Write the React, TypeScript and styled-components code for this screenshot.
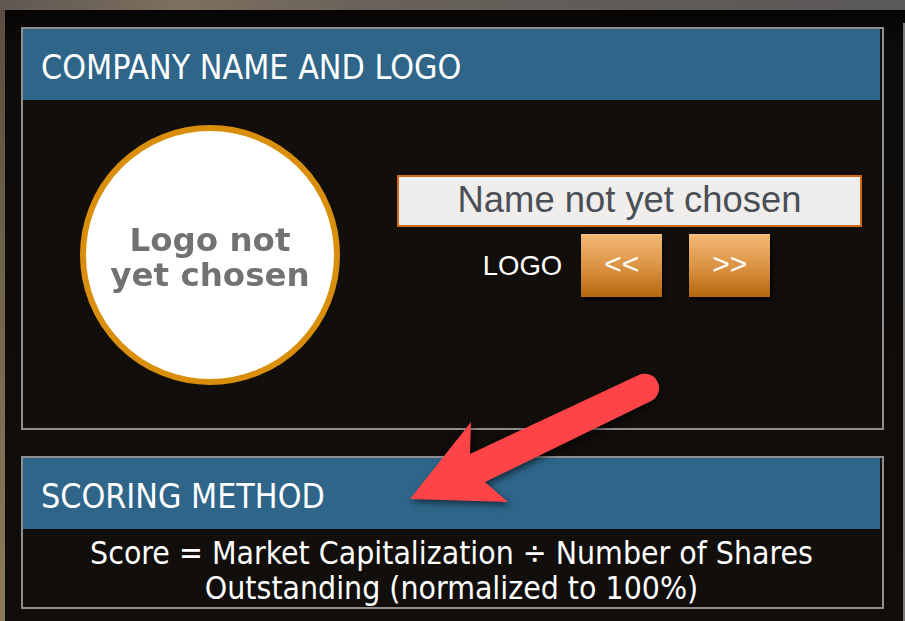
import React from "react";
import styled, { createGlobalStyle } from "styled-components";

const GlobalStyle = createGlobalStyle`
    html, body {
        margin: 0;
        padding: 0;
        background: #0d0b09;
    }
    * {
        box-sizing: border-box;
    }
`;

function Arrow() {
    return (
        <ArrowLayer width="905" height="621" viewBox="0 0 905 621">
            <path
                d="M410 499 L471 422 L470 454 L638.8 374.9 A14.5 14.5 0 0 1 651.2 401.1 L485 482 L508 502 Z"
                fill="#ff4448"
            />
        </ArrowLayer>
    );
}

function App() {
    return (
        <Page>
            <GlobalStyle />
            <TopStrip />
            <Main>
                <LeftEdge />
                <Frame>
                    <Column>
                        <Panel $height={403}>
                            <PanelHeader>COMPANY NAME AND LOGO</PanelHeader>
                            <LogoBody>
                                <LogoCircle>
                                    <LogoPlaceholder>
                                        Logo not
                                        <br />
                                        yet chosen
                                    </LogoPlaceholder>
                                </LogoCircle>
                                <Controls>
                                    <NameBox>Name not yet chosen</NameBox>
                                    <LogoRow>
                                        <LogoLabel>LOGO</LogoLabel>
                                        <NavButton>&lt;&lt;</NavButton>
                                        <NavButton>&gt;&gt;</NavButton>
                                    </LogoRow>
                                </Controls>
                            </LogoBody>
                        </Panel>
                        <Panel $height={153}>
                            <PanelHeader>SCORING METHOD</PanelHeader>
                            <ScoreText>
                                Score = Market Capitalization ÷ Number of Shares
                                <br />
                                Outstanding (normalized to 100%)
                            </ScoreText>
                        </Panel>
                    </Column>
                    <SidePanel />
                </Frame>
            </Main>
            <Arrow />
        </Page>
    );
}

export default App;

const Page = styled.div`
    position: relative;
    width: 905px;
    height: 621px;
    overflow: hidden;
    display: flex;
    flex-direction: column;
    background: #0d0b09;
`;

const TopStrip = styled.div`
    height: 10px;
    flex-shrink: 0;
    background: linear-gradient(
        90deg,
        #5f5751 0%,
        #7d705f 20%,
        #6a625a 40%,
        #5e5b58 70%,
        #5c5a59 100%
    );
`;

const Main = styled.div`
    flex: 1;
    display: flex;
`;

const LeftEdge = styled.div`
    width: 5px;
    flex-shrink: 0;
    background: linear-gradient(180deg, #5a4e40 0%, #7a6a50 60%, #8c7a5a 100%);
`;

const Frame = styled.div`
    flex: 1;
    display: flex;
    gap: 19px;
    padding: 17px 0 0 16px;
    background: linear-gradient(180deg, #070504 0px, #0e0c0a 40px, #100d0b 100%);
`;

const Column = styled.div`
    width: 863px;
    flex-shrink: 0;
    display: flex;
    flex-direction: column;
    gap: 26px;
`;

const Panel = styled.section<{ $height: number }>`
    height: ${(p) => p.$height}px;
    border: 2px solid #8e8e8e;
    padding: 0 2px 0 0;
    background: #110e0c;
    display: flex;
    flex-direction: column;
`;

const SidePanel = styled.div`
    width: 20px;
    margin-top: -4px;
    border-left: 2px solid #7a7a7a;
    border-top: 2px solid #7a7a7a;
    background: #110e0c;
`;

const PanelHeader = styled.h2`
    margin: 0;
    height: 71px;
    flex-shrink: 0;
    display: flex;
    align-items: center;
    padding: 5px 0 0 18px;
    background: #2e6589;
    color: #ffffff;
    font-family: "DejaVu Sans Condensed", "DejaVu Sans", sans-serif;
    font-stretch: condensed;
    font-size: 33.7px;
    font-weight: 400;
`;

const LogoBody = styled.div`
    display: flex;
    align-items: flex-start;
    padding: 25px 0 0 57px;
`;

const LogoCircle = styled.div`
    width: 260px;
    height: 260px;
    flex-shrink: 0;
    border-radius: 50%;
    border: 6px solid #d98e0c;
    background: #ffffff;
    display: flex;
    align-items: center;
    justify-content: center;
`;

const LogoPlaceholder = styled.div`
    margin-top: 6px;
    color: #727272;
    font-family: "DejaVu Sans", Verdana, sans-serif;
    font-size: 32.5px;
    font-weight: 700;
    line-height: 35px;
    text-align: center;
    filter: blur(0.7px);
`;

const Controls = styled.div`
    margin: 50px 0 0 57px;
    display: flex;
    flex-direction: column;
    align-items: center;
    gap: 7px;
`;

const NameBox = styled.div`
    width: 465px;
    height: 52px;
    border: 2px solid #cf6b16;
    background: #f0eeec;
    color: #4a4f57;
    font-family: "Liberation Sans", Arial, sans-serif;
    font-size: 36.4px;
    line-height: 46px;
    text-align: center;
`;

const LogoRow = styled.div`
    display: flex;
    align-items: center;
    gap: 27px;
    margin-left: -6px;
`;

const LogoLabel = styled.span`
    margin-right: -8px;
    color: #ffffff;
    font-family: "Liberation Sans", Arial, sans-serif;
    font-size: 27.5px;
`;

const NavButton = styled.button`
    width: 81px;
    height: 63px;
    padding: 0 0 4px;
    border: none;
    border-top: 1px solid #f6c48a;
    background: linear-gradient(180deg, #f3b874 0%, #dc9444 50%, #b5660e 100%);
    box-shadow: 2px 3px 4px rgba(0, 0, 0, 0.7);
    color: #ffffff;
    font-family: "Liberation Sans", Arial, sans-serif;
    font-size: 30px;
    cursor: pointer;
`;

const ScoreText = styled.p`
    margin: 0;
    padding-top: 7px;
    color: #ffffff;
    font-family: "DejaVu Sans Condensed", "DejaVu Sans", sans-serif;
    font-stretch: condensed;
    font-size: 31.7px;
    line-height: 35px;
    text-align: center;
`;

const ArrowLayer = styled.svg`
    position: absolute;
    left: 0;
    top: 0;
    pointer-events: none;
    filter: drop-shadow(2px 3px 3px rgba(0, 0, 0, 0.55));
`;
